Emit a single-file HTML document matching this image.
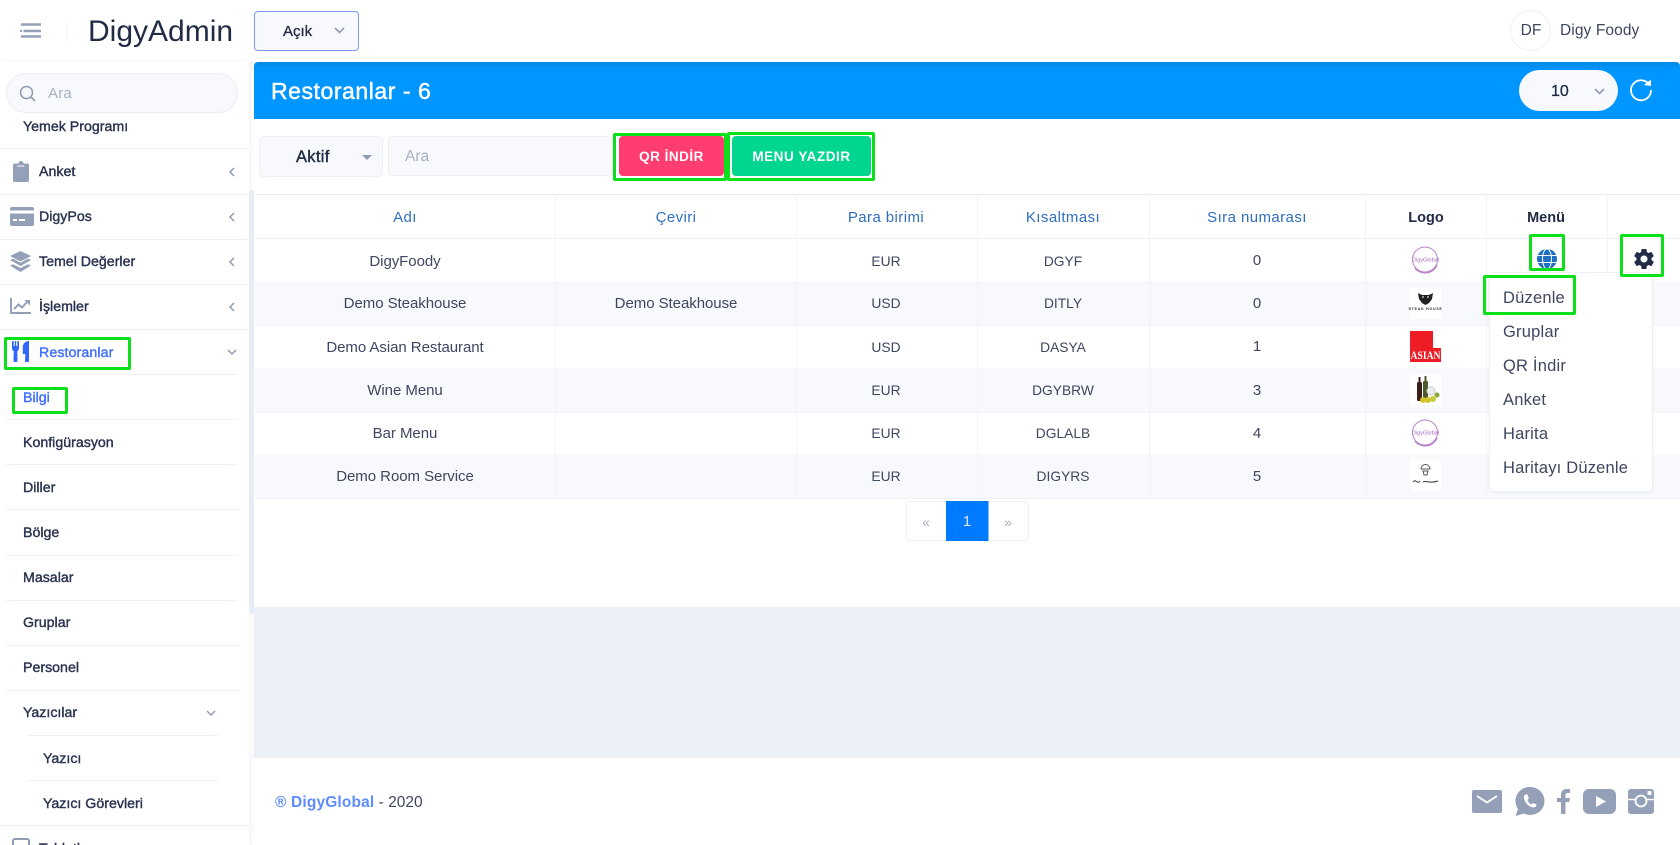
<!DOCTYPE html>
<html lang="tr"><head><meta charset="utf-8"><title>DigyAdmin</title>
<style>
html,body{margin:0;padding:0;width:1680px;height:845px;overflow:hidden;background:#fff}
body{position:relative;font-family:"Liberation Sans",sans-serif;color:#222b45}
.a{position:absolute}
.t{position:absolute;white-space:nowrap;line-height:20px;height:20px}
.s{font-size:14.2px;color:#2a3350;-webkit-text-stroke:.4px #2a3350}
.l{position:absolute;height:1px;background:#edf1f7;left:0;width:249px}
.l2{left:6px;width:232px}
.c{font-size:15px;color:#3f4660;transform:translateX(-50%);letter-spacing:-.05px}
.k{font-size:13.8px;letter-spacing:0}
.h{font-size:15px;color:#2f6fc0;transform:translateX(-50%);letter-spacing:.42px}
.hb{font-size:14.5px;color:#222b45;font-weight:bold;transform:translateX(-50%)}
.g{position:absolute;box-sizing:border-box;border:3px solid #0be01a;border-radius:2px}
.d{font-size:16.5px;color:#3f4660;left:1503px;letter-spacing:.2px}
svg{position:absolute;display:block;overflow:visible}
</style></head><body>

<!-- content backgrounds -->
<div class="a" style="left:254px;top:607px;width:1426px;height:151px;background:#ecf0f7"></div>
<div class="a" style="left:255px;top:119px;width:1425px;height:488px;background:#fff;border-radius:0 0 4px 4px"></div>
<div class="a" style="left:254px;top:62px;width:1426px;height:57px;background:linear-gradient(#008fee,#0096ff 6px);border-radius:4px 4px 0 0"></div>

<!-- header -->
<div class="a" style="left:0;top:0;width:1680px;height:62px;background:#fff;box-shadow:0 2px 10px rgba(44,51,73,.1)"></div>
<svg style="left:20px;top:23px" width="22" height="16" viewBox="0 0 22 16"><path d="M1 1.500H21M3.500 8H21M1 13.500H21" stroke="#94a0b8" stroke-width="2.600" fill="none"/><circle cx="1" cy="8" r="1.200" fill="#94a0b8"/></svg>
<div class="a" style="left:66px;top:20px;width:1px;height:22px;background:#f3f5f9"></div>
<div class="t" style="left:88px;top:22px;font-size:30px;color:#222b45;height:20px">DigyAdmin</div>
<div class="a" style="left:254px;top:11px;width:105px;height:40px;box-sizing:border-box;background:#f7f9fc;border:1px solid #7c9cf5;border-radius:4px"></div>
<div class="t" style="left:283px;top:22px;font-size:15px;color:#222b45;-webkit-text-stroke:.3px #222b45">Açık</div>
<svg style="left:334px;top:27px" width="11" height="7" viewBox="0 0 11 7"><path d="M1 1L5.500 5.500L10 1" stroke="#8f9bb3" stroke-width="1.600" fill="none"/></svg>
<div class="a" style="left:1510px;top:10px;width:41px;height:41px;box-sizing:border-box;border:1px solid #edf1f7;border-radius:50%"></div>
<div class="t" style="left:1531px;top:21px;font-size:15.500px;color:#3f4660;transform:translateX(-50%)">DF</div>
<div class="t" style="left:1560px;top:21px;font-size:15.500px;color:#3f4660;letter-spacing:.1px">Digy Foody</div>

<!-- sidebar -->
<div class="a" style="left:0;top:62px;width:249px;height:783px;background:#fff;box-shadow:2px 0 6px rgba(44,51,73,.06)"></div>
<div class="a" style="left:249px;top:190px;width:5px;height:424px;background:#e7ebf4;border-radius:3px"></div>
<div class="a" style="left:6px;top:73px;width:232px;height:40px;box-sizing:border-box;background:#f7f9fc;border:1px solid #e9edf5;border-radius:20px"></div>
<svg style="left:19px;top:85px" width="17" height="17" viewBox="0 0 17 17"><circle cx="7.500" cy="7.500" r="6" stroke="#8f9bb3" stroke-width="1.500" fill="none"/><path d="M12 12L16 16" stroke="#8f9bb3" stroke-width="1.600"/></svg>
<div class="t" style="left:48px;top:84px;font-size:15px;color:#a6b0c4;letter-spacing:.2px">Ara</div>

<div class="t s" style="left:23px;top:117px">Yemek Programı</div><div class="l" style="top:148px"></div>
<div class="t s" style="left:39px;top:162px">Anket</div><div class="l" style="top:194px"></div>
<div class="t s" style="left:39px;top:207px">DigyPos</div><div class="l" style="top:239px"></div>
<div class="t s" style="left:39px;top:252px">Temel Değerler</div><div class="l" style="top:284px"></div>
<div class="t s" style="left:39px;top:297px">İşlemler</div><div class="l" style="top:329px"></div>
<div class="t s" style="left:39px;top:343px;color:#3f6fff;-webkit-text-stroke-color:#3f6fff;letter-spacing:.1px">Restoranlar</div><div class="l l2" style="top:374px"></div>
<div class="t s" style="left:23px;top:388px;color:#3f6fff;-webkit-text-stroke-color:#3f6fff">Bilgi</div><div class="l l2" style="top:419px"></div>
<div class="t s" style="left:23px;top:433px">Konfigürasyon</div><div class="l l2" style="top:464px"></div>
<div class="t s" style="left:23px;top:478px">Diller</div><div class="l l2" style="top:509px"></div>
<div class="t s" style="left:23px;top:523px">Bölge</div><div class="l l2" style="top:555px"></div>
<div class="t s" style="left:23px;top:568px">Masalar</div><div class="l l2" style="top:600px"></div>
<div class="t s" style="left:23px;top:613px">Gruplar</div><div class="l l2" style="top:645px"></div>
<div class="t s" style="left:23px;top:658px">Personel</div><div class="l l2" style="top:690px"></div>
<div class="t s" style="left:23px;top:703px">Yazıcılar</div><div class="l" style="top:735px;left:27px;width:191px"></div>
<div class="t s" style="left:43px;top:749px">Yazıcı</div><div class="l" style="top:780px;left:27px;width:191px"></div>
<div class="t s" style="left:43px;top:794px">Yazıcı Görevleri</div><div class="l" style="top:825px"></div>
<div class="t s" style="left:39px;top:839px">Tabletler</div>
<div class="a" style="left:12px;top:838px;width:18px;height:18px;box-sizing:border-box;border:2px solid #8f9bb3;border-radius:3px"></div>

<!-- chevrons left -->
<svg style="left:229px;top:167px" width="6" height="10" viewBox="0 0 6 10"><path d="M5 1L1 5L5 9" stroke="#8f9bb3" stroke-width="1.500" fill="none"/></svg>
<svg style="left:229px;top:212px" width="6" height="10" viewBox="0 0 6 10"><path d="M5 1L1 5L5 9" stroke="#8f9bb3" stroke-width="1.500" fill="none"/></svg>
<svg style="left:229px;top:257px" width="6" height="10" viewBox="0 0 6 10"><path d="M5 1L1 5L5 9" stroke="#8f9bb3" stroke-width="1.500" fill="none"/></svg>
<svg style="left:229px;top:302px" width="6" height="10" viewBox="0 0 6 10"><path d="M5 1L1 5L5 9" stroke="#8f9bb3" stroke-width="1.500" fill="none"/></svg>
<svg style="left:227px;top:349px" width="10" height="6" viewBox="0 0 10 6"><path d="M1 1L5 5L9 1" stroke="#8f9bb3" stroke-width="1.500" fill="none"/></svg>
<svg style="left:206px;top:710px" width="10" height="6" viewBox="0 0 10 6"><path d="M1 1L5 5L9 1" stroke="#8f9bb3" stroke-width="1.500" fill="none"/></svg>

<!-- sidebar icons -->
<svg style="left:13px;top:161px" width="16" height="21" viewBox="0 0 16 21"><path d="M2 2.500H5.500A2.500 2.500 0 0 1 10.500 2.500H14A2 2 0 0 1 16 4.500V19A2 2 0 0 1 14 21H2A2 2 0 0 1 0 19V4.500A2 2 0 0 1 2 2.500Z" fill="#94a0b8"/><path d="M4.500 5H11.500" stroke="#fff" stroke-width="1"/></svg>
<svg style="left:10px;top:207px" width="24" height="19" viewBox="0 0 24 19"><path d="M2 0H22A2 2 0 0 1 24 2V3.500H0V2A2 2 0 0 1 2 0ZM0 6.500H24V17A2 2 0 0 1 22 19H2A2 2 0 0 1 0 17Z" fill="#94a0b8"/><path d="M3 13H7M9 13H15" stroke="#fff" stroke-width="2"/></svg>
<svg style="left:10px;top:251px" width="21" height="21" viewBox="0 0 21 21"><path d="M10.500 0L21 5L10.500 10.500L0 5Z" fill="#94a0b8"/><path d="M0 9L3 7.600L10.500 11.800L18 7.600L21 9L10.500 15Z" fill="#94a0b8"/><path d="M0 14.500L3 13.200L10.500 17L18 13.200L21 14.500L10.500 21Z" fill="#94a0b8"/></svg>
<svg style="left:10px;top:298px" width="21" height="16" viewBox="0 0 21 16"><path d="M1 0V15H21" stroke="#94a0b8" stroke-width="2" fill="none"/><path d="M4 11L8.500 6.500L12 9.500L17 4" stroke="#94a0b8" stroke-width="2" fill="none"/><path d="M14.500 2H20V7.500Z" fill="#94a0b8"/></svg>
<svg style="left:12px;top:341px" width="17" height="21" viewBox="0 0 17 21"><path d="M0 0H1.700V5H2.800V0H4.200V5H5.300V0H7V7C7 8.500 6.300 9.500 5.300 10.200L5.500 20A1 1 0 0 1 4.500 21H2.500A1 1 0 0 1 1.500 20L1.700 10.200C.7 9.500 0 8.500 0 7ZM17 0V20A1 1 0 0 1 16 21H14A1 1 0 0 1 13 20L13.300 13H10.800V6C10.800 2.500 13.500 0 17 0Z" fill="#3366ff"/></svg>

<!-- panel heading -->
<div class="t" style="left:271px;top:81px;font-size:23px;color:#fff;letter-spacing:.55px;-webkit-text-stroke:.45px #fff">Restoranlar - 6</div>
<div class="a" style="left:1519px;top:70px;width:99px;height:41px;background:#f7f9fc;border-radius:21px"></div>
<div class="t" style="left:1551px;top:82px;font-size:16px;color:#222b45;-webkit-text-stroke:.3px #222b45">10</div>
<svg style="left:1594px;top:88px" width="11" height="7" viewBox="0 0 11 7"><path d="M1 1L5.500 5.500L10 1" stroke="#8f9bb3" stroke-width="1.600" fill="none"/></svg>
<svg style="left:1630px;top:79px" width="22" height="22" viewBox="0 0 22 22"><path d="M19.500 6A10 10 0 1 0 21 11" stroke="#fff" stroke-width="1.800" fill="none"/><path d="M14 6L21 7L21 0.500Z" fill="#fff"/></svg>

<!-- filter row -->
<div class="a" style="left:259px;top:136px;width:124px;height:41px;box-sizing:border-box;background:#f7f9fc;border:1px solid #edf1f7;border-radius:4px"></div>
<div class="t" style="left:296px;top:147px;font-size:16.500px;color:#222b45;-webkit-text-stroke:.4px #222b45;letter-spacing:.3px">Aktif</div>
<div class="a" style="left:362px;top:155px;border-left:5px solid transparent;border-right:5px solid transparent;border-top:5px solid #8f9bb3"></div>
<div class="a" style="left:388px;top:136px;width:225px;height:40px;box-sizing:border-box;background:#f7f9fc;border:1px solid #edf1f7;border-radius:4px"></div>
<div class="t" style="left:405px;top:147px;font-size:15.500px;color:#a6b0c4">Ara</div>
<div class="a" style="left:619px;top:136px;width:105px;height:40px;background:#ff3d71;border-radius:4px"></div>
<div class="t" style="left:671.500px;top:147px;font-size:13.500px;font-weight:bold;color:#fff;transform:translateX(-50%);letter-spacing:.5px">QR İNDİR</div>
<div class="a" style="left:732px;top:136px;width:139px;height:40px;background:#00d68f;border-radius:4px"></div>
<div class="t" style="left:801.500px;top:147px;font-size:13.500px;font-weight:bold;color:#fff;transform:translateX(-50%);letter-spacing:.55px">MENU YAZDIR</div>

<!-- table -->
<div class="a" style="left:255px;top:194px;width:1425px;height:1px;background:#e7ebf3"></div>
<div class="a" style="left:255px;top:238px;width:1425px;height:1px;background:#edf1f7"></div>
<div class="a" style="left:255px;top:281px;width:1425px;height:44px;background:#f7f9fc"></div>
<div class="a" style="left:255px;top:368px;width:1425px;height:44px;background:#f7f9fc"></div>
<div class="a" style="left:255px;top:454px;width:1425px;height:44px;background:#f7f9fc"></div>
<div class="a" style="left:255px;top:325px;width:1425px;height:1px;background:#f1f4f9"></div>
<div class="a" style="left:255px;top:412px;width:1425px;height:1px;background:#f1f4f9"></div>
<div class="a" style="left:255px;top:498px;width:1425px;height:1px;background:#edf1f7"></div>
<div class="a" style="left:555px;top:194px;width:1px;height:304px;background:#f0f3f8"></div>
<div class="a" style="left:796px;top:194px;width:1px;height:304px;background:#f0f3f8"></div>
<div class="a" style="left:977px;top:194px;width:1px;height:304px;background:#f0f3f8"></div>
<div class="a" style="left:1149px;top:194px;width:1px;height:304px;background:#f0f3f8"></div>
<div class="a" style="left:1365px;top:194px;width:1px;height:304px;background:#f0f3f8"></div>
<div class="a" style="left:1486px;top:194px;width:1px;height:304px;background:#f0f3f8"></div>
<div class="a" style="left:1607px;top:194px;width:1px;height:304px;background:#f0f3f8"></div>

<div class="t h" style="left:405px;top:208px">Adı</div>
<div class="t h" style="left:676px;top:208px">Çeviri</div>
<div class="t h" style="left:886px;top:208px">Para birimi</div>
<div class="t h" style="left:1063px;top:208px">Kısaltması</div>
<div class="t h" style="left:1257px;top:208px">Sıra numarası</div>
<div class="t hb" style="left:1426px;top:208px">Logo</div>
<div class="t hb" style="left:1546px;top:208px">Menü</div>

<div class="t c" style="left:405px;top:252px">DigyFoody</div>
<div class="t c k" style="left:886px;top:252px">EUR</div>
<div class="t c k" style="left:1063px;top:252px">DGYF</div>
<div class="t c" style="left:1257px;top:251px">0</div>

<div class="t c" style="left:405px;top:294px">Demo Steakhouse</div>
<div class="t c" style="left:676px;top:294px">Demo Steakhouse</div>
<div class="t c k" style="left:886px;top:294px">USD</div>
<div class="t c k" style="left:1063px;top:294px">DITLY</div>
<div class="t c" style="left:1257px;top:294px">0</div>

<div class="t c" style="left:405px;top:338px">Demo Asian Restaurant</div>
<div class="t c k" style="left:886px;top:338px">USD</div>
<div class="t c k" style="left:1063px;top:338px">DASYA</div>
<div class="t c" style="left:1257px;top:337px">1</div>

<div class="t c" style="left:405px;top:381px">Wine Menu</div>
<div class="t c k" style="left:886px;top:381px">EUR</div>
<div class="t c k" style="left:1063px;top:381px">DGYBRW</div>
<div class="t c" style="left:1257px;top:381px">3</div>

<div class="t c" style="left:405px;top:424px">Bar Menu</div>
<div class="t c k" style="left:886px;top:424px">EUR</div>
<div class="t c k" style="left:1063px;top:424px">DGLALB</div>
<div class="t c" style="left:1257px;top:424px">4</div>

<div class="t c" style="left:405px;top:467px">Demo Room Service</div>
<div class="t c k" style="left:886px;top:467px">EUR</div>
<div class="t c k" style="left:1063px;top:467px">DIGYRS</div>
<div class="t c" style="left:1257px;top:467px">5</div>

<!-- logos -->
<svg style="left:1411px;top:246px" width="29" height="27" viewBox="0 0 29 27"><circle cx="14" cy="13.500" r="12.500" stroke="#b583c8" stroke-width="1" fill="none"/><path d="M4 22A13 13 0 0 0 26 19" stroke="#b583c8" stroke-width="1.500" fill="none"/><text x="14.500" y="15.500" font-size="5.500" text-anchor="middle" fill="#a86cc0" font-family="Liberation Sans">DigyGlobal</text></svg>
<div class="a" style="left:1410px;top:288px;width:31px;height:31px;background:#fff"></div>
<svg style="left:1410px;top:288px" width="31" height="31" viewBox="0 0 31 31"><path d="M8 5L12 7H19L23 5L22 11L19 15L15.500 17L12 15L9 11Z" fill="#222"/><path d="M12 9H14M17 9H19" stroke="#fff" stroke-width="1"/><text x="15.500" y="22" font-size="3.800" font-weight="bold" text-anchor="middle" fill="#333" font-family="Liberation Sans" letter-spacing=".6">STEAK HOUSE</text></svg>
<svg style="left:1410px;top:331px" width="31" height="31" viewBox="0 0 31 31"><path d="M0 0H23V17H31V31H0Z" fill="#ee1c25"/><text x="15.500" y="28" font-size="12" font-weight="bold" text-anchor="middle" fill="#fff" font-family="Liberation Serif" textLength="30" lengthAdjust="spacingAndGlyphs">ASIAN</text></svg>
<div class="a" style="left:1410px;top:374px;width:31px;height:31px;background:#fff"></div>
<svg style="left:1410px;top:374px" width="31" height="31" viewBox="0 0 31 31"><rect x="7" y="8" width="5" height="19" rx="1.500" fill="#3a1d1d"/><rect x="8.500" y="3" width="2" height="6" fill="#3a1d1d"/><rect x="13" y="7" width="5" height="20" rx="1.500" fill="#4d5a2c"/><rect x="14.500" y="2" width="2" height="6" fill="#4d5a2c"/><circle cx="21" cy="17" r="4" fill="#eee" stroke="#ccc"/><circle cx="13" cy="26" r="3" fill="#d6c42c"/><circle cx="18" cy="26" r="3" fill="#d6c42c"/><circle cx="23" cy="25" r="3" fill="#c8cc3c"/><circle cx="27" cy="21" r="2.500" fill="#8aa83c"/></svg>
<svg style="left:1411px;top:419px" width="29" height="27" viewBox="0 0 29 27"><circle cx="14" cy="13.500" r="12.500" stroke="#b583c8" stroke-width="1" fill="none"/><path d="M4 22A13 13 0 0 0 26 19" stroke="#b583c8" stroke-width="1.500" fill="none"/><text x="14.500" y="15.500" font-size="5.500" text-anchor="middle" fill="#a86cc0" font-family="Liberation Sans">DigyGlobal</text></svg>
<div class="a" style="left:1410px;top:460px;width:31px;height:31px;background:#fff"></div>
<svg style="left:1410px;top:460px" width="31" height="31" viewBox="0 0 31 31"><path d="M11 9A4.500 4.500 0 0 1 20 9H11ZM13 11H18L17 15H14Z" fill="none" stroke="#555" stroke-width="1"/><path d="M3 22C6 18 7 25 10 21M13 22C16 20 19 24 28 21" stroke="#333" stroke-width="1" fill="none"/></svg>

<!-- globe -->
<svg style="left:1537px;top:249px" width="20" height="20" viewBox="0 0 20 20"><circle cx="10" cy="10" r="10" fill="#1f6fc4"/><ellipse cx="10" cy="10" rx="4.500" ry="10" fill="none" stroke="#fff" stroke-width="1"/><path d="M0 6.500H20M0 13.500H20" stroke="#fff" stroke-width="1"/></svg>
<!-- gear -->
<svg style="left:1634px;top:249px" width="20" height="20" viewBox="2 2 20 20"><path fill="#222b45" d="M19.430 12.980c.04-.32.070-.64.070-.98s-.03-.66-.07-.98l2.110-1.650c.19-.15.240-.42.120-.64l-2-3.460c-.12-.22-.39-.30-.61-.22l-2.490 1c-.52-.40-1.080-.73-1.690-.98l-.38-2.650C14.460 2.180 14.250 2 14 2h-4c-.25 0-.46.180-.49.420l-.38 2.650c-.61.250-1.170.59-1.690.98l-2.490-1c-.23-.09-.49 0-.61.220l-2 3.460c-.13.220-.07.490.12.640l2.110 1.650c-.04.320-.07.650-.07.980s.03.660.07.980l-2.110 1.650c-.19.150-.24.420-.12.640l2 3.460c.12.220.39.300.61.220l2.490-1c.52.400 1.080.730 1.690.980l.38 2.650c.03.240.24.420.49.420h4c.25 0 .46-.18.490-.42l.38-2.650c.61-.25 1.170-.59 1.690-.98l2.490 1c.23.090.49 0 .61-.22l2-3.460c.12-.22.070-.49-.12-.64l-2.110-1.650zM12 15.500c-1.930 0-3.500-1.570-3.500-3.500s1.570-3.500 3.500-3.500 3.500 1.570 3.500 3.500-1.570 3.500-3.500 3.500z"/></svg>

<!-- dropdown -->
<div class="a" style="left:1489px;top:272px;width:164px;height:220px;box-sizing:border-box;background:#fff;border:1px solid #edf1f7;border-radius:5px;box-shadow:0 1px 2px rgba(44,51,73,.05)"></div>
<div class="t d" style="top:288px">Düzenle</div>
<div class="t d" style="top:322px">Gruplar</div>
<div class="t d" style="top:356px">QR İndir</div>
<div class="t d" style="top:390px">Anket</div>
<div class="t d" style="top:424px">Harita</div>
<div class="t d" style="top:458px">Haritayı Düzenle</div>

<!-- pagination -->
<div class="a" style="left:906px;top:501px;width:123px;height:40px;box-sizing:border-box;background:#fff;border:1px solid #edf1f7;border-radius:4px"></div>
<div class="a" style="left:946px;top:501px;width:42px;height:40px;background:#007bff;border-right:1px solid #7fbdff"></div>
<div class="t" style="left:926px;top:512px;font-size:14px;color:#a6aebd;transform:translateX(-50%)">«</div>
<div class="t" style="left:967px;top:512px;font-size:15px;color:#dbe9ff;transform:translateX(-50%)">1</div>
<div class="t" style="left:1008px;top:512px;font-size:14px;color:#a6aebd;transform:translateX(-50%)">»</div>

<!-- footer -->
<div class="t" style="left:275px;top:793px;font-size:15.500px;color:#3f4660"><b style="color:#5d8cff;letter-spacing:.15px">® DigyGlobal</b> - 2020</div>
<svg style="left:1472px;top:790px" width="30" height="23" viewBox="0 0 30 23"><rect width="30" height="23" rx="2" fill="#94a0b8"/><path d="M5 6L15 12.500L25 6" stroke="#fff" stroke-width="1.800" fill="none"/></svg>
<svg style="left:1515px;top:787px" width="30" height="30" viewBox="0 0 30 30"><path d="M15.500 0A14 14 0 0 1 15.500 28C13 28 11 27.400 9 26.500L0.500 29L3 22A14 14 0 0 1 15.500 0Z" fill="#94a0b8"/><path d="M10.500 7.500C8 9 8.500 12.500 11.500 16.500C14.500 20 18.500 21.500 21 19.500L21.500 17.500L18 16L16.500 17.500C15 17 13 15 12.300 13L13.800 11.500L12.500 7.500Z" fill="#fff"/></svg>
<svg style="left:1557px;top:789px" width="13" height="25" viewBox="0 0 13 25"><path d="M4 25V13H0V9H4V6C4 2 6.500 0 9.500 0H13V4H10.500C9 4 8.500 4.800 8.500 6V9H13L12.300 13H8.500V25Z" fill="#94a0b8"/></svg>
<svg style="left:1583px;top:789px" width="33" height="25" viewBox="0 0 33 25"><rect width="33" height="25" rx="6" fill="#94a0b8"/><path d="M13 7L23 12.500L13 18Z" fill="#fff"/></svg>
<svg style="left:1628px;top:789px" width="26" height="25" viewBox="0 0 26 25"><rect width="26" height="25" rx="3" fill="#94a0b8"/><path d="M0 10.500H7M19 10.500H26" stroke="#fff" stroke-width="1.600"/><circle cx="13" cy="12" r="5.500" fill="none" stroke="#fff" stroke-width="1.800"/><rect x="19.500" y="2" width="4" height="4" rx=".8" fill="#fff"/></svg>

<!-- green annotation boxes -->
<div class="g" style="left:4px;top:337px;width:127px;height:33px"></div>
<div class="g" style="left:12px;top:387px;width:56px;height:27px"></div>
<div class="g" style="left:613px;top:133px;width:114px;height:48px"></div>
<div class="g" style="left:727px;top:132px;width:148px;height:49px"></div>
<div class="g" style="left:1529px;top:234px;width:36px;height:37px"></div>
<div class="g" style="left:1620px;top:234px;width:44px;height:43px"></div>
<div class="g" style="left:1483px;top:275px;width:93px;height:40px"></div>
</body></html>
